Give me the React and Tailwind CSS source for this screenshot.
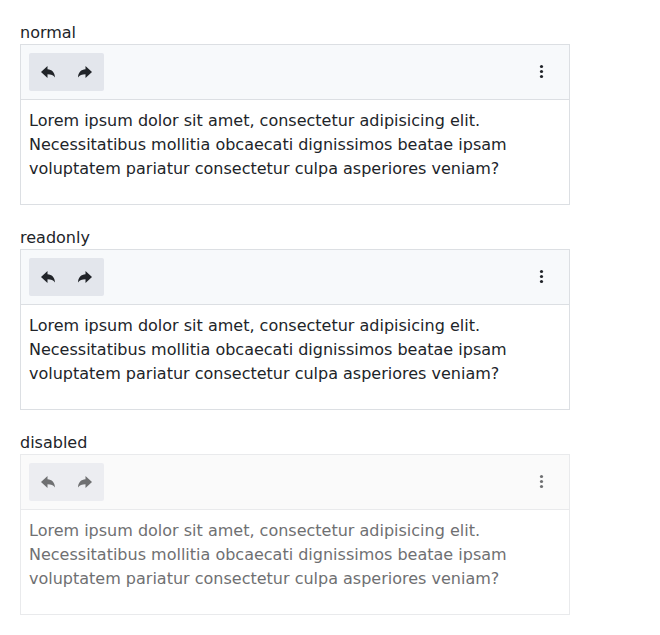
const TEXT =
  "Lorem ipsum dolor sit amet, consectetur adipisicing elit. Necessitatibus mollitia obcaecati dignissimos beatae ipsam voluptatem pariatur consectetur culpa asperiores veniam?";

function Undo() {
  return (
    <svg viewBox="0 0 16 16" className="block h-4 w-4" fill="currentColor">
      <path d="M7.500 2v3.300c4.300.3 7.300 3 7.500 8.300-1.500-2.300-4-3.300-7.500-3.300V14L1 8z" />
    </svg>
  );
}

function Redo() {
  return (
    <svg viewBox="0 0 16 16" className="block h-4 w-4" fill="currentColor">
      <path d="M8.500 2v3.300c-4.300.3-7.300 3-7.500 8.300 1.500-2.300 4-3.300 7.500-3.300V14L15 8z" />
    </svg>
  );
}

function More() {
  return (
    <svg viewBox="0 0 15 15" className="block h-[15px] w-[15px]" fill="currentColor">
      <circle cx="7.500" cy="2.500" r="1.600" />
      <circle cx="7.500" cy="7.500" r="1.600" />
      <circle cx="7.500" cy="12.500" r="1.600" />
    </svg>
  );
}

function Editor({ label, disabled }) {
  return (
    <section>
      <div className="h-6 pt-px">{label}</div>
      <div className={`h-[161px] w-[550px] border ${disabled ? "border-[#e9eaec] text-[#6f7072]" : "border-[#dcdfe3]"}`}>
        <div className={`flex h-[55px] items-start justify-between border-b px-2 pt-2 ${disabled ? "border-[#e9eaec] bg-[#fafafa]" : "border-[#dcdfe3] bg-[#f7f9fb]"}`}>
          <div className={`flex h-[38px] w-[75px] rounded-[2px] ${disabled ? "bg-[#ecedf1]" : "bg-[#e3e6ec]"}`}>
            <button className="flex w-[38px] items-center justify-center"><Undo /></button>
            <button className="flex w-9 items-center justify-center"><Redo /></button>
          </div>
          <button className="flex h-[37px] w-[39px] items-center justify-center"><More /></button>
        </div>
        <p className="px-2 pt-[9px]">{TEXT}</p>
      </div>
    </section>
  );
}

export default function App() {
  return (
    <main className="flex min-h-[635px] flex-col gap-5 bg-white px-5 pt-5 font-['DejaVu_Sans',sans-serif] text-base text-[#212429]">
      <Editor label="normal" />
      <Editor label="readonly" />
      <Editor label="disabled" disabled />
    </main>
  );
}
